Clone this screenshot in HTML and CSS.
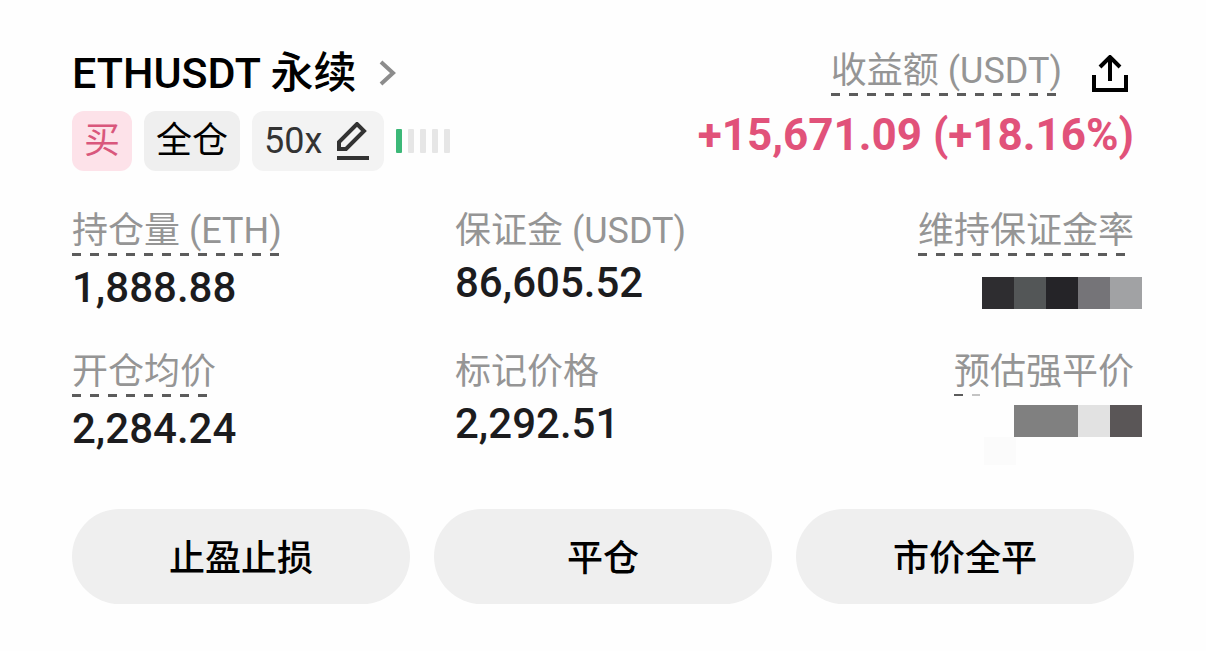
FILE: index.html
```html
<!DOCTYPE html>
<html lang="zh-CN">
<head>
<meta charset="utf-8">
<meta name="viewport" content="width=device-width, initial-scale=1">
<title>ETHUSDT 永续</title>
<link rel="stylesheet" href="styles.css">
</head>
<body>
<main class="position">
  <header class="head">
    <div class="instrument">
      <h1 class="title"><a class="title-link" href="#contract">ETHUSDT 永续
        <svg class="chevron" viewBox="0 0 18 28" aria-hidden="true"><path d="M2 3l12 11L2 25"/></svg></a></h1>
      <div class="tags">
        <span class="tag tag-buy">买</span>
        <span class="tag">全仓</span>
        <button class="tag tag-leverage" type="button" aria-label="调整杠杆 50x">50x
          <svg class="pencil" viewBox="0 0 34 38" aria-hidden="true"><path d="M3 27v-7L21 2l7 7-18 18z"/><path d="M1 36h32"/></svg>
        </button>
        <span class="risk" aria-hidden="true"><i class="bar bar-on"></i><i class="bar"></i><i class="bar"></i><i class="bar"></i><i class="bar"></i></span>
      </div>
    </div>
    <div class="profit">
      <div class="profit-top">
        <span class="label dashed">收益额 (USDT)</span>
        <button class="share" type="button" aria-label="分享">
          <svg class="share-icon" viewBox="0 0 36 38" aria-hidden="true"><path d="M2 20v15h32V20M18 26V3M8 12l10-10 10 10"/></svg>
        </button>
      </div>
      <div class="profit-value">+15,671.09 (+18.16%)</div>
    </div>
  </header>

  <dl class="stats">
    <div class="stat"><dt class="label dashed">持仓量 (ETH)</dt><dd class="value">1,888.88</dd></div>
    <div class="stat"><dt class="label">保证金 (USDT)</dt><dd class="value">86,605.52</dd></div>
    <div class="stat stat-end"><dt class="label dashed">维持保证金率</dt>
      <dd class="mosaic"><i class="cell c1"></i><i class="cell c2"></i><i class="cell c3"></i><i class="cell c4"></i><i class="cell c5"></i></dd></div>
    <div class="stat"><dt class="label dashed">开仓均价</dt><dd class="value">2,284.24</dd></div>
    <div class="stat"><dt class="label">标记价格</dt><dd class="value">2,292.51</dd></div>
    <div class="stat stat-end"><dt class="label dashed masked">预估强平价</dt>
      <dd class="mosaic mosaic-faded"><i class="cell c6"></i><i class="cell c6"></i><i class="cell c7"></i><i class="cell c8"></i></dd></div>
  </dl>

  <div class="actions">
    <button class="action" type="button">止盈止损</button>
    <button class="action" type="button">平仓</button>
    <button class="action" type="button">市价全平</button>
  </div>
</main>
</body>
</html>
```
FILE: styles.css
```css
* { box-sizing: border-box; }

body {
  margin: 0;
  background: #fefefe;
  color: #000;
  font-family: Roboto, "Noto Sans CJK SC", sans-serif;
}

button {
  border: 0;
  padding: 0;
  background: none;
  color: inherit;
  font: inherit;
  cursor: pointer;
}

svg {
  flex: none;
  fill: none;
  stroke: currentColor;
}

.position { padding: 45px 72px; }

.head {
  display: flex;
  justify-content: space-between;
}

.title {
  margin: 0 0 10px;
  font-size: 43px;
  font-weight: 500;
  line-height: 56px;
}

.title-link {
  display: flex;
  align-items: center;
  gap: 22px;
  color: inherit;
  text-decoration: none;
}

.chevron {
  width: 18px;
  height: 28px;
  color: #8c8c8c;
  stroke-width: 4;
}

.tags {
  display: flex;
  align-items: center;
  gap: 12px;
}

.tag {
  display: flex;
  align-items: center;
  height: 60px;
  padding: 0 12px;
  border-radius: 12px;
  background: #efefef;
  font-size: 36px;
  line-height: 60px;
}

.tag-buy {
  background: #fde2e9;
  color: #d9577c;
}

.tag-leverage {
  gap: 14px;
  padding-right: 14px;
  background: #f3f3f3;
  color: #333;
}

.pencil {
  width: 34px;
  height: 38px;
  stroke-width: 4;
}

.risk { display: flex; gap: 6px; }

.bar {
  width: 6px;
  height: 24px;
  border-radius: 1px;
  background: #e6e6e6;
}

.bar-on { background: #3cb878; }

.profit {
  display: flex;
  flex-direction: column;
  align-items: flex-end;
  padding-top: 4px;
}

.profit-top {
  display: flex;
  align-items: center;
  gap: 30px;
  padding-right: 6px;
}

.share { display: flex; }

.share-icon {
  width: 36px;
  height: 38px;
  stroke-width: 4;
}

.profit-value {
  margin-top: 9px;
  color: #e1527a;
  font-size: 44px;
  font-weight: 700;
  line-height: 56px;
}

.label {
  color: #959595;
  font-size: 36px;
  font-weight: 400;
  line-height: 44px;
  white-space: nowrap;
}

.dashed {
  padding-bottom: 5px;
  background: repeating-linear-gradient(90deg, #5c5c5c 0 9px, transparent 9px 18px) 0 44px / 100% 3px no-repeat;
}

.stats {
  display: grid;
  grid-template-columns: 383fr 383fr 296fr;
  row-gap: 37px;
  margin: 38px 0 55px;
}

.stat {
  display: flex;
  flex-direction: column;
  align-items: flex-start;
}

.stat-end { align-items: flex-end; }

.value {
  margin: 5px 0 0;
  color: #1c1c1e;
  font-size: 42px;
  font-weight: 500;
  line-height: 50px;
}

.mosaic {
  display: flex;
  margin: 19px -8px 0 0;
}

.mosaic-faded {
  position: relative;
  margin-top: 6px;
}

.mosaic-faded::before {
  content: "";
  position: absolute;
  top: 32px;
  left: -30px;
  width: 32px;
  height: 28px;
  background: #fbfbfb;
}

.masked {
  background-image: linear-gradient(90deg, #5c5c5c 0 9px, transparent 9px 18px, #c4c4c4 18px);
  background-size: 26px 2px;
}

.cell { width: 32px; height: 32px; }
.c1 { background: #2e2d30; }
.c2 { background: #535657; }
.c3 { background: #252428; }
.c4 { background: #757478; }
.c5 { background: #a1a2a4; }
.c6 { background: #808080; }
.c7 { background: #e2e2e2; }
.c8 { background: #5a5657; }

.actions {
  display: grid;
  grid-template-columns: repeat(3, 1fr);
  gap: 24px;
}

.action {
  height: 95px;
  padding-bottom: 4px;
  border-radius: 48px;
  background: #efefef;
  font-size: 36px;
  font-weight: 500;
}
```
